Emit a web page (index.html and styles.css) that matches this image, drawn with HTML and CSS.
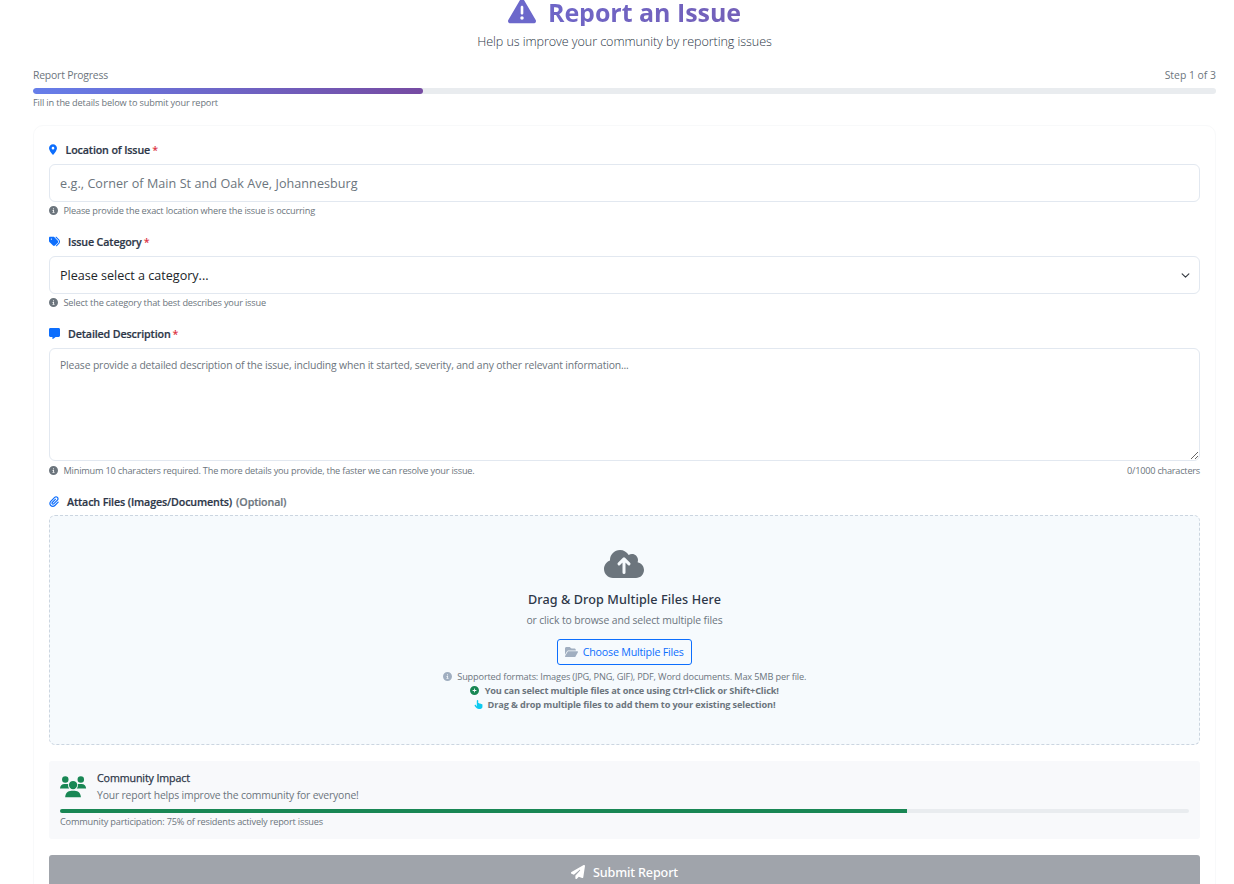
FILE: index.html
```html
<!DOCTYPE html>
<html lang="en">
<head>
<meta charset="utf-8">
<title>Report an Issue</title>
<link rel="stylesheet" href="styles.css">
</head>
<body>
<svg class="defs" width="0" height="0">
  <symbol id="info" viewBox="0 0 512 512"><path d="M256 512A256 256 0 1 0 256 0a256 256 0 1 0 0 512zM216 336h24V272H216c-13.3 0-24-10.7-24-24s10.7-24 24-24h48c13.3 0 24 10.7 24 24v88h8c13.3 0 24 10.7 24 24s-10.7 24-24 24H216c-13.3 0-24-10.7-24-24s10.7-24 24-24zm40-208a32 32 0 1 1 0 64 32 32 0 1 1 0-64z"/></symbol>
</svg>
<main class="page">
  <header class="header">
    <h1 class="title">
      <svg class="title-icon" viewBox="0 0 512 512"><path d="M256 32c14.2 0 27.3 7.5 34.5 19.8l216 368c7.3 12.4 7.3 27.7 .2 40.1S486.3 480 472 480H40c-14.3 0-27.6-7.7-34.7-20.1s-7-27.8 .2-40.1l216-368C228.7 39.5 241.8 32 256 32zm0 128c-13.3 0-24 10.7-24 24V296c0 13.3 10.7 24 24 24s24-10.7 24-24V184c0-13.3-10.7-24-24-24zm32 224a32 32 0 1 0 -64 0 32 32 0 1 0 64 0z"/></svg>
      <span class="title-text">Report an Issue</span>
    </h1>
    <p class="subtitle">Help us improve your community by reporting issues</p>
  </header>

  <section class="progress">
    <div class="progress-row"><span class="progress-name">Report Progress</span><span class="progress-step">Step 1 of 3</span></div>
    <div class="progress-track"><div class="progress-fill"></div></div>
    <p class="progress-note">Fill in the details below to submit your report</p>
  </section>

  <form class="card">
    <div class="field">
      <label class="label label-location">
        <svg class="icon-pin" viewBox="0 0 384 512"><path d="M215.7 499.2C267 435 384 279.4 384 192C384 86 298 0 192 0S0 86 0 192c0 87.4 117 243 168.3 307.2c12.3 15.3 35.1 15.3 47.4 0zM192 128a64 64 0 1 1 0 128 64 64 0 1 1 0-128z"/></svg>
        <span>Location of Issue</span><b class="req">*</b>
      </label>
      <input class="control input" type="text" placeholder="e.g., Corner of Main St and Oak Ave, Johannesburg">
      <p class="help"><svg class="icon-info"><use href="#info"/></svg><span class="help-location">Please provide the exact location where the issue is occurring</span></p>
    </div>

    <div class="field">
      <label class="label label-category">
        <svg class="icon-label" viewBox="0 0 512 512"><path d="M345 39.1L472.8 168.4c52.4 53 52.4 138.2 0 191.2L360.8 472.9c-9.3 9.4-24.5 9.5-33.9 .2s-9.5-24.5-.2-33.9L438.6 325.9c33.9-34.3 33.9-89.4 0-123.7L310.9 72.9c-9.3-9.4-9.2-24.6 .2-33.9s24.6-9.2 33.9 .2zM0 229.5V80C0 53.5 21.5 32 48 32H197.5c17 0 33.3 6.7 45.3 18.7l168 168c25 25 25 65.5 0 90.5L277.3 442.7c-25 25-65.5 25-90.5 0l-168-168C6.7 262.7 0 246.5 0 229.5zM144 144a32 32 0 1 0 -64 0 32 32 0 1 0 64 0z"/></svg>
        <span>Issue Category</span><b class="req">*</b>
      </label>
      <div class="control select"><span>Please select a category...</span>
        <svg class="chevron" viewBox="0 0 16 16"><path d="m2 5 6 6 6-6"/></svg></div>
      <p class="help"><svg class="icon-info"><use href="#info"/></svg><span class="help-category">Select the category that best describes your issue</span></p>
    </div>

    <div class="field">
      <label class="label label-description">
        <svg class="icon-label" viewBox="0 0 512 512"><path d="M64 0C28.7 0 0 28.7 0 64V352c0 35.3 28.7 64 64 64h96v80c0 6.1 3.4 11.6 8.8 14.3s11.9 2.1 16.8-1.5L309.3 416H448c35.3 0 64-28.7 64-64V64c0-35.3-28.7-64-64-64H64z"/></svg>
        <span>Detailed Description</span><b class="req">*</b>
      </label>
      <textarea class="control textarea" placeholder="Please provide a detailed description of the issue, including when it started, severity, and any other relevant information..."></textarea>
      <p class="help help-wide"><svg class="icon-info"><use href="#info"/></svg><span class="help-description">Minimum 10 characters required. The more details you provide, the faster we can resolve your issue.</span><span class="counter">0/1000 characters</span></p>
    </div>

    <div class="field">
      <label class="label label-files">
        <svg class="icon-clip" viewBox="0 0 448 512"><path d="M364.2 83.8c-24.4-24.4-64-24.4-88.4 0l-184 184c-42.1 42.1-42.1 110.3 0 152.4s110.3 42.1 152.4 0l152-152c10.9-10.9 28.7-10.9 39.6 0s10.9 28.7 0 39.6l-152 152c-64 64-167.6 64-231.6 0s-64-167.6 0-231.6l184-184c46.3-46.3 121.3-46.3 167.6 0s46.3 121.3 0 167.6l-176 176c-28.6 28.6-75 28.6-103.6 0s-28.6-75 0-103.6l144-144c10.9-10.9 28.7-10.9 39.6 0s10.9 28.7 0 39.6l-144 144c-6.7 6.7-6.7 17.7 0 24.4s17.7 6.7 24.4 0l176-176c24.4-24.4 24.4-64 0-88.4z"/></svg>
        <span>Attach Files (Images/Documents)</span><span class="optional">(Optional)</span>
      </label>
      <div class="dropzone">
        <svg class="cloud" viewBox="0 0 640 512"><path d="M144 480C64.5 480 0 415.5 0 336c0-62.8 40.2-116.2 96.2-135.9c-.1-2.7-.2-5.4-.2-8.1c0-88.4 71.6-160 160-160c59.3 0 111 32.2 138.7 80.2C409.9 102 428.3 96 448 96c53 0 96 43 96 96c0 12.2-2.3 23.8-6.4 34.6C596 238.4 640 290.1 640 352c0 70.7-57.3 128-128 128H144z"/><path class="cloud-arrow" d="M320 392V196M240 254l80-80 80 80"/></svg>
        <h2 class="drop-title">Drag &amp; Drop Multiple Files Here</h2>
        <p class="drop-text">or click to browse and select multiple files</p>
        <button class="choose" type="button">
          <svg class="icon-folder" viewBox="0 0 576 512"><path d="M88.7 223.8L0 375.8V96C0 60.7 28.7 32 64 32H181.5c17 0 33.3 6.7 45.3 18.7l26.5 26.5c12 12 28.3 18.7 45.3 18.7H416c35.3 0 64 28.7 64 64v32H144c-22.8 0-43.8 12.1-55.3 31.8zm27.6 16.1C122.1 230 132.6 224 144 224H544c11.5 0 22 6.1 27.7 16.1s5.7 22.2-.1 32.1l-112 192C453.9 474 443.4 480 432 480H32c-11.5 0-22-6.1-27.7-16.1s-5.7-22.2 .1-32.1l112-192z"/></svg>
          <span>Choose Multiple Files</span>
        </button>
        <p class="hint hint-formats"><svg class="icon-info muted"><use href="#info"/></svg><span>Supported formats: Images (JPG, PNG, GIF), PDF, Word documents. Max 5MB per file.</span></p>
        <p class="hint hint-strong"><svg class="icon-info green" viewBox="0 0 512 512"><path d="M256 512A256 256 0 1 0 256 0a256 256 0 1 0 0 512zM232 344V280H168c-13.3 0-24-10.7-24-24s10.7-24 24-24h64V168c0-13.3 10.7-24 24-24s24 10.7 24 24v64h64c13.3 0 24 10.7 24 24s-10.7 24-24 24H280v64c0 13.3-10.7 24-24 24s-24-10.7-24-24z"/></svg><span>You can select multiple files at once using Ctrl+Click or Shift+Click!</span></p>
        <p class="hint hint-strong"><svg class="icon-hand" viewBox="0 0 448 512"><path d="M128 40c0-22.1 17.9-40 40-40s40 17.9 40 40V188.2c8.5-7.6 19.7-12.2 32-12.2c20.6 0 38.2 13 45 31.2c8.8-9.3 21.2-15.2 35-15.2c25.3 0 46 19.5 47.9 44.3c8.5-7.7 19.8-12.3 32.1-12.3c26.5 0 48 21.5 48 48v112c0 70.7-57.3 128-128 128H234.7c-60.3 0-118.2-27.7-154.7-80L8 336c-13.3-17.7-9.7-42.7 8-56s42.7-9.7 56 8l56 74.7V40z"/></svg><span>Drag &amp; drop multiple files to add them to your existing selection!</span></p>
      </div>
    </div>

    <section class="impact">
      <div class="impact-head">
        <svg class="icon-users" viewBox="0 0 27 22"><circle cx="5.4" cy="3.4" r="3.3"/><circle cx="21.2" cy="3.4" r="3.3"/><circle cx="13.3" cy="9" r="4.2"/><path d="M0 12.6C0 9.9 1.9 8 4.6 8H7.500q.5 0 .9.2C8 10 8.5 11.5 9.5 12.6zM26.6 12.6C26.6 9.9 24.7 8 22 8H19q-.5 0-.9.2C18.500 10 18 11.5 17 12.6zM5.3 21.4C5.3 17.5 8 14.7 11.7 14.7H15C18.6 14.7 21.3 17.5 21.3 21.4z"/></svg>
        <div>
          <h3 class="impact-title">Community Impact</h3>
          <p class="impact-text">Your report helps improve the community for everyone!</p>
        </div>
      </div>
      <div class="impact-track"><div class="impact-fill"></div></div>
      <p class="impact-note">Community participation: 75% of residents actively report issues</p>
    </section>

    <button class="submit" type="button">
      <svg class="icon-plane" viewBox="0 0 512 512"><path d="M498.1 5.6c10.1 7 15.4 19.1 13.5 31.2l-64 416c-1.5 9.7-7.4 18.2-16 23s-18.9 5.4-28 1.6L284 427.7l-68.5 74.1c-8.9 9.7-22.9 12.9-35.2 8.1S160 493.2 160 480V396.4c0-4 1.5-7.8 4.2-10.7L331.8 202.8c5.8-6.3 5.6-16-.4-22s-15.7-6.4-22-.7L106 360.8 17.7 316.6C7.1 311.3 .3 300.7 0 288.9s5.9-22.8 16.1-28.7l448-256c10.7-6.1 23.9-5.5 34 1.4z"/></svg>
      <span>Submit Report</span>
    </button>
  </form>
</main>
</body>
</html>
```
FILE: styles.css
```css
* { box-sizing: border-box; }
html { overflow: hidden; }
body {
  margin: 0;
  height: 884px;
  overflow: hidden;
  background: #fff;
  color: #6c757d;
  font-family: "Open Sans", "Noto Sans", sans-serif;
  font-size: 10.7px;
}
h1, h2, h3, p { margin: 0; }
svg { fill: currentColor; flex: none; }
span { white-space: nowrap; }
.defs { display: block; }
.page { display: flow-root; padding: 0 18px 0 33px; }

.header { text-align: center; }
.title {
  display: flex;
  justify-content: center;
  gap: 12px;
  height: 26px;
  font-size: 25px;
  line-height: 24px;
  font-weight: 700;
}
.title-icon { width: 28px; height: 28px; margin-top: -3px; color: #6c68cb; }
.title-text {
  height: 26px;
  letter-spacing: -0.03px;
  background: linear-gradient(135deg, #6e66c8, #7460b8);
  -webkit-background-clip: text;
  background-clip: text;
  color: transparent;
}
.subtitle {
  margin-top: 6px;
  font-size: 12.6px;
  line-height: 20px;
  font-weight: 300;
  letter-spacing: -0.08px;
  color: #2d3748;
}

.progress { margin-top: 15px; }
.progress-row { display: flex; justify-content: space-between; line-height: 16px; font-size: 10.4px; }
.progress-name { letter-spacing: -0.19px; }
.progress-track { height: 6px; margin-top: 5px; border-radius: 3px; background: #e9ecef; overflow: hidden; }
.progress-fill { width: 33%; height: 100%; border-radius: 3px; background: linear-gradient(90deg, #667eea, #764ba2); }
.progress-note { margin-top: 2px; font-size: 9.2px; line-height: 14px; letter-spacing: -0.147px; }

.card {
  display: flex;
  flex-direction: column;
  gap: 16px;
  margin-top: 15px;
  padding: 16px 15px;
  border: 1px solid #f8f9fa;
  border-radius: 10px;
  background: #fff;
}
.label {
  display: flex;
  align-items: center;
  height: 16px;
  margin-bottom: 6px;
  line-height: 16px;
  font-weight: 600;
  letter-spacing: -0.135px;
  color: #2d3748;
}
.label span { -webkit-text-stroke: 0.2px currentColor; }
.label svg { margin-bottom: 1px; color: #0d6efd; }
.icon-pin { width: 8px; height: 11px; margin-right: 8.5px; }
.icon-label { width: 11px; height: 11px; margin-right: 8px; }
.icon-clip { width: 10px; height: 11px; margin-right: 8px; }
.req { margin-left: 2px; color: #dc3545; font-weight: 600; }
.optional { margin-left: 4px; color: #6c757d; }
.label-files { margin-bottom: 5px; }

.control {
  display: flex;
  width: 100%;
  height: 38px;
  padding: 0 10px;
  border: 1px solid #e2e8f0;
  border-radius: 6px;
  background: #fff;
  font-family: inherit;
  font-size: 12.6px;
  outline: 0;
}
.control::placeholder { color: #6c757d; opacity: 1; }
.input { letter-spacing: 0.055px; }
.select { align-items: center; justify-content: space-between; color: #212529; letter-spacing: -0.017px; }
.chevron { width: 9px; height: 9px; margin-right: -1px; fill: none; stroke: #343a40; stroke-width: 2; stroke-linecap: round; stroke-linejoin: round; }
.textarea { height: 113px; padding: 8px 10px; resize: vertical; font-size: 10.4px; line-height: 16px; letter-spacing: -0.154px; }
.help { display: flex; align-items: center; margin-top: 2px; font-size: 9.2px; line-height: 14px; }
.help-wide { margin-top: 3px; }
.icon-info { width: 9px; height: 9px; margin: 0 5.5px 1px 0; }
.help-location { letter-spacing: -0.178px; }
.help-category { letter-spacing: -0.167px; }
.help-description { letter-spacing: -0.197px; }
.counter { margin-left: auto; letter-spacing: -0.235px; }

.dropzone {
  display: flex;
  flex-direction: column;
  align-items: center;
  height: 230px;
  padding-top: 32px;
  border: 1px dashed #cbd5e0;
  border-radius: 6px;
  background: #f6fafd;
}
.cloud { width: 40px; height: 32px; margin-right: 1px; }
.cloud-arrow { fill: none; stroke: #f6fafd; stroke-width: 48; stroke-linecap: round; stroke-linejoin: round; }
.drop-title { margin-top: 10px; font: 500 12.6px/20px "Noto Sans", sans-serif; letter-spacing: 0.096px; color: #2d3748; }
.drop-text { margin-top: 2px; font-size: 10.4px; line-height: 16px; letter-spacing: -0.12px; }
.choose {
  display: flex;
  align-items: center;
  justify-content: center;
  width: 135px;
  height: 26px;
  margin: 11px 0 5px;
  padding: 0;
  border: 1px solid #0d6efd;
  border-radius: 3px;
  background: transparent;
  color: #0d6efd;
  font: 400 10.7px/16px "Open Sans", sans-serif;
  letter-spacing: -0.211px;
}
.icon-folder { width: 13px; height: 12px; margin-right: 4.5px; color: #a0aec0; }
.hint { display: flex; align-items: center; font-size: 9.2px; line-height: 14px; }
.hint-formats { letter-spacing: -0.157px; }
.hint-strong { font-weight: 700; letter-spacing: -0.133px; }
.muted { color: #a0aec0; }
.green { color: #198754; }
.icon-hand { width: 9px; height: 9px; margin: 0 5px 1px 0; color: #0dcaf0; }

.impact { height: 78px; padding: 9px 11px; border-radius: 3px; background: #f8f9fb; }
.impact-head { display: flex; gap: 10.5px; }
.icon-users { width: 26.5px; height: 22px; margin-top: 6px; color: #198754; }
.impact-title { font-size: 10.7px; line-height: 16px; font-weight: 500; letter-spacing: -0.124px; -webkit-text-stroke: 0.25px #2d3748; color: #2d3748; }
.impact-text { margin-top: 1px; font-size: 10.4px; line-height: 16px; letter-spacing: -0.17px; }
.impact-track { height: 4px; margin-top: 6px; border-radius: 2px; background: #e9ecef; overflow: hidden; }
.impact-fill { width: 75%; height: 100%; background: #198754; }
.impact-note { margin-top: 2px; font-size: 9.2px; line-height: 14px; letter-spacing: -0.183px; }

.submit {
  display: flex;
  align-items: center;
  justify-content: center;
  gap: 8px;
  height: 35px;
  padding: 0;
  border: 0;
  border-radius: 3px;
  background: #a0a4ab;
  color: #fff;
  font: 500 12.6px/20px "Noto Sans", sans-serif;
  letter-spacing: -0.147px;
}
.icon-plane { width: 14px; height: 14px; margin-bottom: 1px; }
```
